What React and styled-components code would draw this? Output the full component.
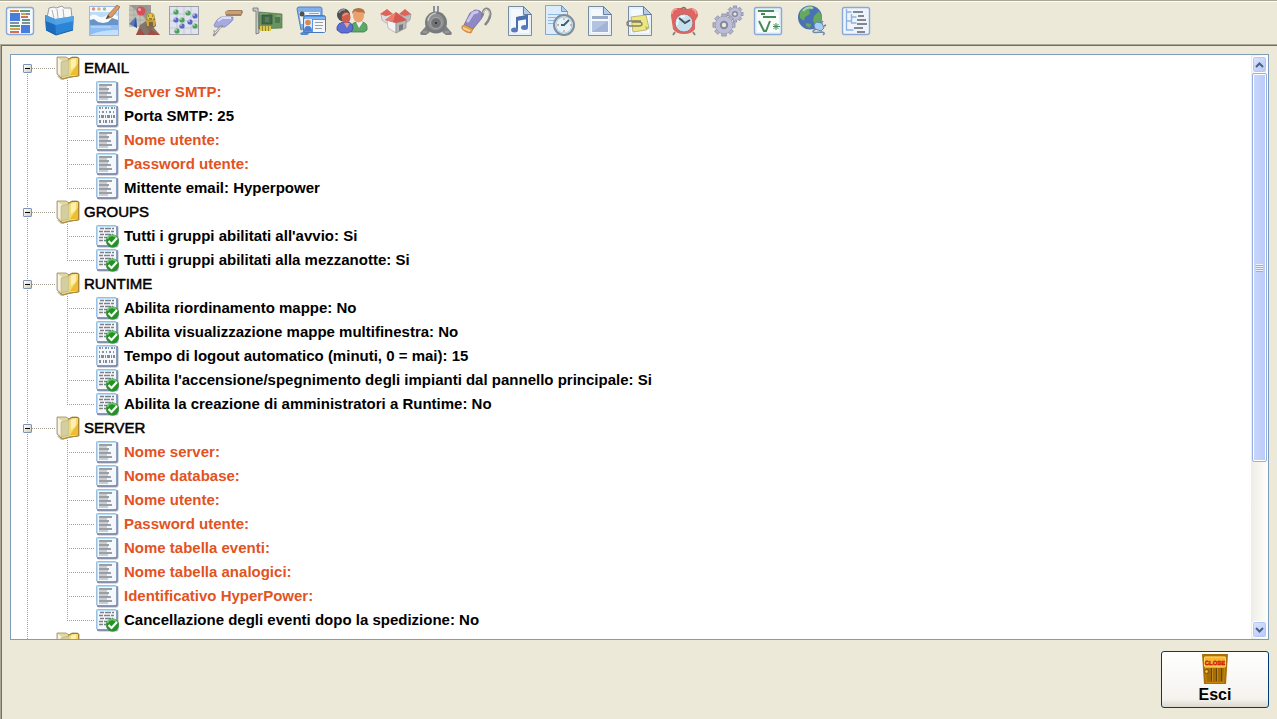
import React, { useState } from 'react'
import styled, { createGlobalStyle } from 'styled-components'

const GlobalStyle = createGlobalStyle`
  * {
    box-sizing: border-box;
  }
  body {
    margin: 0;
    background: #ece9d8;
    font-family: "Liberation Sans", Arial, sans-serif;
    color: #000;
  }
  ul {
    list-style: none;
    margin: 0;
    padding: 0;
  }
  button {
    font: inherit;
    color: inherit;
    padding: 0;
    border: 0;
    background: none;
  }
`

/* ---------- toolbar icons, all on a 32x32 grid ---------- */

const PanelIcon = () => (
  <svg viewBox='0 0 32 32'>
    <rect x='2.5' y='2.5' width='27' height='27' rx='2.5' fill='#f4f9ff' stroke='#8aa9d6' strokeWidth='1.4' />
    <path d='M6 6h9' stroke='#c98a4b' strokeWidth='2' />
    <path d='M16 6h10M6 21h10M18 15h8' stroke='#5d9a72' strokeWidth='2' />
    <path d='M17 12h7M6 27h9' stroke='#d2705e' strokeWidth='2' />
    <path d='M17 9h8M6 24h10' stroke='#d6a04a' strokeWidth='2' />
    <path d='M22 9h4M18 18h8' stroke='#8a8f9c' strokeWidth='2' />
    <rect x='6' y='8' width='10' height='8' fill='#4a7ddb' />
    <rect x='17' y='20' width='9' height='8' fill='#4a7ddb' />
    <path d='M6 18h9' stroke='#7d91ab' strokeWidth='2' />
  </svg>
)

const FilesIcon = () => (
  <svg viewBox='0 0 32 32'>
    <path d='M3 13l2-10 5-1 2 1 6-2 2 2 7 0 1 10-11 4z' fill='#f8f8f6' stroke='#999ca1' />
    <path d='M8 5l2 8M13 4l1 9M19 4l1 9' stroke='#b0b2b6' fill='none' />
    <path d='M1 10l10 4 19-3-1 14-17 5-10-5z' fill='#2b84d6' />
    <path d='M1 10l10 4 1 16-10-5z' fill='#1c6cbd' />
    <path d='M1 10l10 4 19-3-.3 5-18 4-10-4z' fill='#63b0ef' opacity='.7' />
    <path d='M2 25l10 5 17-5' fill='none' stroke='#1d5c9f' />
  </svg>
)

const PaintIcon = () => (
  <svg viewBox='0 0 32 32'>
    <rect x='1.5' y='1.5' width='29' height='29' fill='#f4f8ff' stroke='#9db7de' />
    <circle cx='5.500' cy='4' r='1.700' fill='#e58b86' />
    <circle cx='11' cy='4' r='1.700' fill='#e6b16d' />
    <circle cx='16.500' cy='4' r='1.700' fill='#8cc78c' />
    <rect x='2' y='7' width='28' height='6' fill='#bcdcfa' />
    <path d='M2 11q4-3 8 0t9-1q5-2 11 1v8H2z' fill='#f5fbff' />
    <path d='M2 20v-5l4-1 4 3 5 1 5-1 4-4 6 2v5z' fill='#6a93c6' />
    <rect x='2' y='20' width='28' height='10' fill='#8dbdf3' />
    <path d='M3 22h20' stroke='#cfe6ff' />
    <path d='M2 30q10-5 28-5v5z' fill='#c3e0fc' />
    <path d='M18 14l2-4L29 0l3 2-8 10z' fill='#d99c62' stroke='#96653b' strokeWidth='.7' />
    <path d='M18 14l2-4 2 2z' fill='#5a4a3c' />
  </svg>
)

const ShapesIcon = () => (
  <svg viewBox='0 0 32 32'>
    <rect x='1' y='0' width='22' height='22' fill='#c2c1b9' />
    <path d='M1 5h22M1 10h22M1 15h22M6 0v22M12 0v22M18 0v22' stroke='#a5a49d' strokeWidth='.7' />
    <path d='M1 0h22v20L12 8z' fill='#80807c' opacity='.6' />
    <circle cx='13' cy='6' r='4.500' fill='#d6505a' />
    <circle cx='11.500' cy='4.500' r='1.500' fill='#f3a9a9' />
    <path d='M1 19l7-7 1 11z' fill='#5677bd' />
    <path d='M8 12l1 11-3-2z' fill='#36548f' />
    <path d='M8 30l4-10 6-4 8 7 6 7z' fill='#85746c' />
    <path d='M8 30l4-7 5 7zM22 24l10 6H20z' fill='#a14e45' />
    <path d='M19 13h8l1 8-7 5-4-5z' fill='#7d6d52' />
    <path d='M18 15h9v6h-8z' fill='#d5a046' />
    <path d='M21 17h4v4h-4z' fill='#77663f' />
    <circle cx='22.500' cy='12' r='4' fill='#e3c341' stroke='#8b752c' strokeWidth='.6' />
    <path d='M20 11h1M24 11h1M21 14h3' stroke='#55452b' />
  </svg>
)

const GridIcon = () => (
  <svg viewBox='0 0 32 32'>
    <rect x='1.500' y='1.500' width='29' height='28' fill='#e0e2ee' stroke='#9c9fa8' />
    <path d='M9 2v27M16 2v27M23 2v27M2 9h28M2 16h28M2 23h28' stroke='#c3c6d6' />
    {[[8, 7], [20, 8], [14, 15], [27, 21], [9, 26]].map(([x, y]) => (
      <g key={`${x}-${y}`}>
        <circle cx={x} cy={y} r='2.600' fill='#4ca254' />
        <circle cx={x - 1} cy={y - 1} r='.9' fill='#b5e0b3' />
      </g>
    ))}
    {[[27, 11], [8, 15], [22, 17], [14, 21]].map(([x, y]) => (
      <g key={`${x}-${y}`}>
        <circle cx={x} cy={y} r='2.600' fill='#5468c4' />
        <circle cx={x - 1} cy={y - 1} r='.9' fill='#bcc6f2' />
      </g>
    ))}
  </svg>
)

const TrowelIcon = () => (
  <svg viewBox='0 0 32 32'>
    <path d='M13 7l3-2h14l1 2-2 4H14z' fill='#a08064' />
    <path d='M14 6h15v3H13z' fill='#cf9f6b' />
    <path d='M2 20l3-5 4-3 12 0q1 3-3 6l-5 4-10 0z' fill='#a4abe0' stroke='#8186b5' strokeWidth='.8' />
    <path d='M6 16l4-3 9 0' stroke='#d9ddfb' fill='none' strokeWidth='2' />
    <path d='M10 21q-3 1-4 4l-4 5' stroke='#96989e' strokeWidth='2.500' fill='none' strokeLinecap='round' />
    <path d='M2 25q0 2 1 4' stroke='#a5a6ab' strokeWidth='1.500' fill='none' />
    <path d='M9 22q-2 1-3 3l-3 3' stroke='#e6e6ea' fill='none' />
  </svg>
)

const BoardIcon = () => (
  <svg viewBox='0 0 32 32'>
    <path d='M1 3h5l1 25-3 1V6H1z' fill='#c6c8ca' stroke='#77797b' strokeWidth='.9' />
    <path d='M7 7l23 2v14l-23 1z' fill='#6a9560' stroke='#517549' strokeWidth='.7' />
    <path d='M8 9h8M24 11h5' stroke='#8fb884' />
    <rect x='10' y='10' width='10' height='9' fill='#42694a' stroke='#2f4d38' strokeWidth='.7' />
    <rect x='13' y='12' width='4' height='5' fill='#587c5c' />
    <rect x='23' y='12' width='5' height='6' fill='#4d7854' />
    <path d='M8 21h11v5H8z' fill='#d9c84f' />
    <path d='M10.500 21v5M13.500 21v5M16.500 21v5' stroke='#948830' />
  </svg>
)

const CardsIcon = () => (
  <svg viewBox='0 0 32 32'>
    <path d='M1 4q0-2 2-2h21q2 0 2 2v8H10v10l-5 3z' fill='#80b0ea' stroke='#577fb8' />
    <path d='M3 7h21v4H9v8H5z' fill='#eef5fc' />
    <circle cx='6' cy='9' r='2.500' fill='#505050' />
    <path d='M13 8.500h10' stroke='#9aa3ad' />
    <path d='M4 28q5-1 5-6l4 7-2 1H5z' fill='#4d8bd8' />
    <rect x='7.500' y='10.500' width='22' height='17' rx='2' fill='#5796e2' stroke='#4779ba' />
    <path d='M9 13h20' stroke='#b5d7fb' />
    <path d='M17 15h12v12H17z' fill='#f4f7fa' />
    <path d='M19 17.500h8M19 20.500h8M19 23.500h7' stroke='#979da4' />
    <rect x='8' y='14' width='8' height='12' fill='#d9e9fb' />
    <circle cx='12' cy='17.500' r='2.800' fill='#d88a4c' />
    <path d='M8 26q0-5 4-5t4 5z' fill='#4f7fd0' />
  </svg>
)

const UsersIcon = () => (
  <svg viewBox='0 0 32 32'>
    <path d='M15 27V21q2-4 6-4l3 2 2-2q5 1 5 5v3l-3 2z' fill='#5da768' stroke='#3f7b49' strokeWidth='.8' />
    <path d='M20 17l3 6 4-6z' fill='#eef2ee' />
    <ellipse cx='22.500' cy='10.500' rx='5.500' ry='7' fill='#eba06f' />
    <path d='M16 9q0-6 6.500-6t6.500 6l-3-2q-4 1-7-1z' fill='#b5714a' />
    <path d='M1 25v-3q1-4 6-5h6q4 2 4 6l-1 3-4 2H5z' fill='#5d6fd3' stroke='#3e4a9b' strokeWidth='.8' />
    <path d='M8 18l3 5 3-5z' fill='#e5a28f' />
    <circle cx='7.500' cy='10' r='6.500' fill='#4c4e50' />
    <path d='M3 8q2-4 6-3' stroke='#939698' fill='none' strokeWidth='1.500' />
    <ellipse cx='10' cy='12.500' rx='4.500' ry='5.500' fill='#cf5e4a' />
    <path d='M7 11q2-3 5-2' stroke='#e99a84' fill='none' strokeWidth='1.500' />
  </svg>
)

const HousesIcon = () => (
  <svg viewBox='0 0 32 32'>
    <path d='M1 9l5 2 5-2v8l-5 1-4-3z' fill='#dedfe0' stroke='#97999b' strokeWidth='.6' />
    <path d='M21 9l5 2 5-2-1 6-4 3-5-1z' fill='#b9bbbd' stroke='#8d8f91' strokeWidth='.6' />
    <path d='M0 9l7-5 6 5-7 2zM19 9l6-5 6 5-6 2z' fill='#dc655b' />
    <path d='M7 15l9 3 0 10-8-5z' fill='#f3f3f3' stroke='#aaa' strokeWidth='.7' />
    <path d='M16 18l10-3v8l-10 5z' fill='#b4b6b7' stroke='#8b8d8e' strokeWidth='.7' />
    <path d='M5 15L16 7l11 8-11 3z' fill='#d6584e' />
    <path d='M16 7L5 15l8 2z' fill='#ec7d71' />
    <path d='M19 20l4-1v5l-4 2z' fill='#77797b' />
  </svg>
)

const SirenIcon = () => (
  <svg viewBox='0 0 32 32'>
    <path d='M0 28l6-7 4 6-4 3H1zM32 28l-6-7-4 6 4 3h5z' fill='#808284' />
    <rect x='13' y='1' width='6' height='7' fill='#8f9193' />
    <path d='M15 1h2v7h-2z' fill='#e8e8e8' />
    <circle cx='16' cy='17.500' r='11' fill='#77797b' />
    <circle cx='15.500' cy='17' r='8.500' fill='#8d8f91' />
    <path d='M8 16q1-7 8-8' fill='none' stroke='#c4c5c6' strokeWidth='1.500' />
    <circle cx='16' cy='18' r='5.500' fill='#707274' stroke='#a9aaab' />
    <circle cx='16' cy='18' r='1' fill='#232425' />
    <path d='M3 27h4M25 27h4' stroke='#aaacad' />
  </svg>
)

const UsbIcon = () => (
  <svg viewBox='0 0 32 32'>
    <path d='M20 11q3 1 3-4 2-5 6-2 3 4-1 11l-3 4' fill='none' stroke='#85878b' strokeWidth='2.500' />
    <path d='M23 8q1-4 4-3.500 3 1 2 6' fill='none' stroke='#dedede' />
    <path d='M4 20l6-12 5-3q6 0 7 4v4l-9 11z' fill='#8e88c4' stroke='#716b9c' strokeWidth='.8' />
    <path d='M8 16l5-8 4-1' stroke='#c9c5ee' strokeWidth='3' fill='none' strokeLinecap='round' />
    <path d='M2 21l3-1 8 4-2 4q-5 0-9-4z' fill='#eba44e' stroke='#b7742d' strokeWidth='.7' />
    <path d='M3 23l7 3' fill='none' stroke='#f9dc9b' strokeWidth='1.500' />
  </svg>
)

const Page = ({ children }) => (
  <>
    <path d='M4.500 1.500h15l8 8v21h-23z' fill='#e6f0fa' stroke='#7b8ba1' />
    <path d='M7 4h11v7h7v17H7z' fill='#f4f9fe' />
    <path d='M19.500 1.500v8h8z' fill='#b0cdeb' stroke='#69809f' />
    {children}
  </>
)

const MusicIcon = () => (
  <svg viewBox='0 0 32 32'>
    <Page>
      <path d='M13 24V13l10-2v11' fill='none' stroke='#4d6fae' strokeWidth='2' />
      <path d='M12 12l12-2v4l-12 2z' fill='#4d6fae' />
      <ellipse cx='10.500' cy='25' rx='3.500' ry='2.500' fill='#587ab9' />
      <ellipse cx='20.500' cy='22.500' rx='3.500' ry='2.500' fill='#587ab9' />
    </Page>
  </svg>
)

const ScheduleIcon = () => (
  <svg viewBox='0 0 32 32'>
    <path d='M1.500.5h16l6 6v23h-22z' fill='#dcecfb' stroke='#86a6cc' />
    <path d='M17.500.5v6h6z' fill='#b0cdeb' stroke='#7296c2' />
    <path d='M4 9.500h13M4 12.500h8M4 15.500h6M4 18.500h5' stroke='#90b9e4' />
    <circle cx='20' cy='20' r='10' fill='#d2e5f0' stroke='#7d8d9c' strokeWidth='2' />
    <circle cx='20' cy='20' r='8' fill='#e3f3f9' stroke='#b9cdda' />
    <path d='M20 20l5-5M21 20h-4' stroke='#42606e' strokeWidth='1.800' />
    <path d='M20 13v2M20 25v2M13 20h2M26 20h2' stroke='#d69a80' strokeWidth='1.300' />
  </svg>
)

const ReportIcon = () => (
  <svg viewBox='0 0 32 32'>
    <Page>
      <path d='M8 12.500h16' stroke='#9babc9' strokeWidth='3' />
      <rect x='8' y='16' width='16' height='11' fill='#a3b3d6' />
      <path d='M8 27V16h16z' fill='#b5c3e2' />
    </Page>
  </svg>
)

const NoteIcon = () => (
  <svg viewBox='0 0 32 32'>
    <Page>
      <path d='M7 12l15-2 3 13-3 2-13 2z' fill='#ece683' stroke='#aba66a' strokeWidth='.8' />
      <path d='M22 25l-1-4 4 2z' fill='#c2b757' />
      <path d='M17 16H6q-3 0-3 2.500T6 21h9q3 0 3-2t-3-2H8' fill='none' stroke='#85836a' strokeWidth='1.400' />
    </Page>
  </svg>
)

const AlarmIcon = () => (
  <svg viewBox='0 0 32 32'>
    <path d='M7 27l-2 3M25 27l2 3' stroke='#8b8583' strokeWidth='2' />
    <path d='M3 11q0-7 5-8l5 0 6 1 5-1q6 1 6 8l-3 5v8q-3 5-11 5T5 24z' fill='#de6561' />
    <path d='M4 9q0-5 5-5M24 4q4 1 4 5' fill='none' stroke='#f4a29d' strokeWidth='1.500' />
    <path d='M13 4q3-3 5 0' fill='none' stroke='#8c6b69' strokeWidth='1.500' />
    <circle cx='16' cy='18' r='9' fill='#c5e0ee' stroke='#b96b68' />
    <path d='M9 20q0-8 8-9' fill='none' stroke='#e9f8fd' strokeWidth='2' />
    <path d='M11 13l6 5 5-3' fill='none' stroke='#475059' strokeWidth='2' />
  </svg>
)

const Gear = ({ x, y, r }) => (
  <g transform={`translate(${x} ${y})`}>
    {[0, 45, 90, 135, 180, 225, 270, 315].map(a => (
      <rect key={a} x={-r * 0.2} y={-r} width={r * 0.4} height={r * 0.5} transform={`rotate(${a})`} fill='#b3b5cd' stroke='#8c8ea8' strokeWidth='.8' />
    ))}
    <circle r={r * 0.8} fill='#bcbed7' stroke='#9395ae' strokeWidth='.6' />
    <circle r={r * 0.38} fill='#85879d' />
    <circle r={r * 0.2} fill='#ece9d8' />
  </g>
)

const GearsIcon = () => (
  <svg viewBox='0 0 32 32'>
    <Gear x={23} y={9} r={8} />
    <Gear x={12} y={20} r={11} />
  </svg>
)

const FormulaIcon = () => (
  <svg viewBox='0 0 32 32'>
    <rect x='2.500' y='2.500' width='27' height='27' rx='2' fill='#e6f1fa' stroke='#8ba9d4' strokeWidth='1.400' />
    <rect x='5' y='7' width='22' height='20' fill='#f9fdfc' />
    <path d='M6 6h16M9 9h4M11 12h13' stroke='#448b55' strokeWidth='2' />
    <path d='M7 16l5 10h2l4-10' fill='none' stroke='#448b55' strokeWidth='2' />
    <path d='M24 18v7M21 21.500h7M21.500 19l5 5M26.500 19l-5 5' stroke='#448b55' />
  </svg>
)

const GlobeIcon = () => (
  <svg viewBox='0 0 32 32'>
    <circle cx='14' cy='12.500' r='12' fill='#4971b3' />
    <path d='M4 7q5-7 12-6l2 3-5 1 1 4-5 3-1 4-4-3zM18 11l5-5 3 6-2 6-4 2-3-4z' fill='#65a85e' />
    <path d='M10 18l5 1-1 4-4-2z' fill='#65a85e' />
    <path d='M7 6q4-5 10-3' fill='none' stroke='#c5e4ec' strokeWidth='2' opacity='.7' />
    <path d='M20 17l6 1 2 5-3 3-6-2-1-4z' fill='#a6cef0' stroke='#5d88b6' />
    <path d='M25 18l2-2M28 21l2-1' stroke='#67798a' strokeWidth='1.500' />
    <path d='M20 24q-6 3 0 3.500l6-.5q4 1 1 3' fill='none' stroke='#718aa5' strokeWidth='1.500' />
  </svg>
)

const TreeIcon = () => (
  <svg viewBox='0 0 32 32'>
    <rect x='2.500' y='2.500' width='27' height='27' rx='2' fill='#edf4fd' stroke='#8ba9d4' strokeWidth='1.400' />
    <path d='M6.500 4v21h7M6.500 7h5M6.500 16h5M11.500 9v9h5M11.500 12h5' fill='none' stroke='#8eb2dd' strokeWidth='1.300' />
    <path d='M13 7h10M18 11h6M17 15h9M17 19h10M14 23h9M17 27h8' stroke='#85878b' strokeWidth='2' />
  </svg>
)

const toolGroups = [
  [['Pannelli', PanelIcon], ['Archivio', FilesIcon]],
  [['Mappe', PaintIcon], ['Simboli', ShapesIcon], ['Matrice', GridIcon]],
  [['Installazione', TrowelIcon], ['Schede', BoardIcon]],
  [['Anagrafiche', CardsIcon], ['Utenti', UsersIcon]],
  [['Edifici', HousesIcon], ['Sirene', SirenIcon], ['Connessioni', UsbIcon]],
  [['Suoni', MusicIcon], ['Programmazione', ScheduleIcon], ['Report', ReportIcon], ['Note', NoteIcon]],
  [['Allarmi', AlarmIcon]],
  [['Impostazioni', GearsIcon], ['Formule', FormulaIcon]],
  [['Rete', GlobeIcon]],
  [['Struttura', TreeIcon]]
]

/* ---------- tree icons ---------- */

const FolderIcon = () => (
  <svg viewBox='0 0 24 24'>
    <path d='M1 20l4 4 17-4-2-2z' fill='#8c8a80' opacity='.5' />
    <path d='M1 1h9l3 2 3-2h5l2 1v18l-9 1-8 2-3-3-2-2z' fill='#e3d9a0' stroke='#978a62' strokeWidth='.8' />
    <path d='M2 2l4 3v16l-4-4z' fill='#f7f4e4' />
    <path d='M5 6l8-2v15l-8 2z' fill='#d5cf9f' stroke='#b9ae72' strokeWidth='.6' />
    <path d='M13 5l3-3h5v16l-8 2z' fill='#f6dd6b' />
    <path d='M14 19l8-12v12z' fill='#ecbf33' />
    <path d='M15 4l5-2v8l-5 4z' fill='#fdf0b4' />
    <path d='M22.500 2v18' stroke='#a98434' />
    <path d='M12 3.500l4-2h6' fill='none' stroke='#a3753a' />
    <path d='M4 21l3 2 7-2 8-1' fill='none' stroke='#b48c2c' />
  </svg>
)

const SheetBase = () => (
  <>
    <rect x='2' y='2' width='21.500' height='21.500' rx='2' fill='#b4b6bd' />
    <rect x='1' y='1' width='21' height='21' rx='2' fill='#b9dcf5' />
    <rect x='3' y='3' width='18' height='18' fill='#f4f8fc' />
    <path d='M1.500 21V2.500q0-1 1-1H21' fill='none' stroke='#9cc0e2' />
    <path d='M22 2v18q0 2-2 2H2' fill='none' stroke='#7482a6' strokeWidth='1.300' />
  </>
)

const TextIcon = () => (
  <svg viewBox='0 0 24 24'>
    <SheetBase />
    <path d='M4 5h13M4 9h10M4 13h12M4 17h13' stroke='#7c8188' strokeWidth='1.300' />
    <path d='M4 7h8M4 11h9M4 15h8M4 19h9' stroke='#9fa4ab' />
  </svg>
)

const NumberIcon = () => (
  <svg viewBox='0 0 24 24'>
    <SheetBase />
    <path d='M4 4h16' stroke='#8994a0' strokeDasharray='2 1 1 2' strokeWidth='2' />
    <path d='M4 8h15' stroke='#8994a0' strokeDasharray='1 2 2 2' strokeWidth='2' />
    <path d='M4 12.500h16' stroke='#848a90' strokeDasharray='1 1 3 1' strokeWidth='3' />
    <path d='M4 17.500h16' stroke='#848a90' strokeDasharray='2 2 1 1' strokeWidth='3' />
  </svg>
)

const CheckIcon = () => (
  <svg viewBox='0 0 24 24'>
    <SheetBase />
    <path d='M5 4.500h14M4 7.500h15M5 10.500h13M4 13.500h8M4 16.500h7' stroke='#7c8188' strokeDasharray='4 1 6 1' strokeWidth='1.400' />
    <circle cx='17.500' cy='17' r='6.300' fill='#219326' stroke='#2f8433' strokeWidth='.6' />
    <path d='M12.500 15q1-3.500 5-3.500 3 0 4.500 3' fill='none' stroke='#72c76d' strokeWidth='1.500' />
    <path d='M13.500 17l3 3 5.500-6' fill='none' stroke='#fff' strokeWidth='2.200' />
  </svg>
)

const icons = { text: TextIcon, number: NumberIcon, check: CheckIcon }

const DoorIcon = () => (
  <svg viewBox='0 0 26 32' width='26' height='32'>
    <path d='M0 1h26l-2 30H2z' fill='#a8700b' />
    <path d='M2 3h22l-2 27H4z' fill='#c4860f' />
    <path d='M4 15h18l-1 14H5z' fill='#a66c06' />
    <path d='M9.500 15v13M14.500 15v13M19.500 15v13' stroke='#6b4200' />
    <path d='M10.500 15v13M15.500 15v13' stroke='#c48a1c' />
    <rect x='2.500' y='4' width='21' height='10' rx='1' fill='#f6b532' stroke='#ffdc6c' />
    <text x='13' y='11.500' textAnchor='middle' fontFamily='Liberation Sans, sans-serif' fontWeight='bold' fontSize='6' textRendering='geometricPrecision' fill='#d51d0c' stroke='#d51d0c' strokeWidth='.4'>CLOSE</text>
    <circle cx='4.500' cy='18.500' r='2' fill='#edb637' stroke='#704300' strokeWidth='.8' />
  </svg>
)

const Chevron = ({ up }) => (
  <svg width='9' height='6' viewBox='0 0 9 6'>
    <path d={up ? 'M1 5l3.500-3.500L8 5' : 'M1 1l3.500 3.500L8 1'} fill='none' stroke='#4d6185' strokeWidth='2' />
  </svg>
)

/* ---------- data ---------- */

const groups = [
  {
    name: 'EMAIL',
    items: [
      { type: 'text', label: 'Server SMTP:' },
      { type: 'number', label: 'Porta SMTP:', value: '25' },
      { type: 'text', label: 'Nome utente:' },
      { type: 'text', label: 'Password utente:' },
      { type: 'text', label: 'Mittente email:', value: 'Hyperpower' }
    ]
  },
  {
    name: 'GROUPS',
    items: [
      { type: 'check', label: "Tutti i gruppi abilitati all'avvio:", value: 'Si' },
      { type: 'check', label: 'Tutti i gruppi abilitati alla mezzanotte:', value: 'Si' }
    ]
  },
  {
    name: 'RUNTIME',
    items: [
      { type: 'check', label: 'Abilita riordinamento mappe:', value: 'No' },
      { type: 'check', label: 'Abilita visualizzazione mappe multifinestra:', value: 'No' },
      { type: 'number', label: 'Tempo di logout automatico (minuti, 0 = mai):', value: '15' },
      { type: 'check', label: "Abilita l'accensione/spegnimento degli impianti dal pannello principale:", value: 'Si' },
      { type: 'check', label: 'Abilita la creazione di amministratori a Runtime:', value: 'No' }
    ]
  },
  {
    name: 'SERVER',
    items: [
      { type: 'text', label: 'Nome server:' },
      { type: 'text', label: 'Nome database:' },
      { type: 'text', label: 'Nome utente:' },
      { type: 'text', label: 'Password utente:' },
      { type: 'text', label: 'Nome tabella eventi:' },
      { type: 'text', label: 'Nome tabella analogici:' },
      { type: 'text', label: 'Identificativo HyperPower:' },
      { type: 'check', label: 'Cancellazione degli eventi dopo la spedizione:', value: 'No' }
    ]
  },
  { name: '', items: [] }
]

function Group ({ name, items }) {
  const [open, setOpen] = useState(true)
  return (
    <GroupStyled>
      <GroupHeader>
        <Toggle type='button' aria-label={name} aria-expanded={open} onClick={() => setOpen(!open)}>
          <svg width='9' height='9' viewBox='0 0 9 9'>
            <path d={open ? 'M2 4.500h5' : 'M2 4.500h5M4.500 2v5'} stroke='#000' />
          </svg>
        </Toggle>
        <Connector $width={24} />
        <NodeIcon><FolderIcon /></NodeIcon>
        <GroupName>{name}</GroupName>
      </GroupHeader>
      {open && (
        <ul>
          {items.map(({ type, label, value }) => {
            const Icon = icons[type]
            return (
              <Item key={label}>
                <Connector $width={28} />
                <NodeIcon><Icon /></NodeIcon>
                <ItemText $missing={!value}>{label} {value}</ItemText>
              </Item>
            )
          })}
        </ul>
      )}
    </GroupStyled>
  )
}

function App () {
  return (
    <Window>
      <GlobalStyle />
      <Toolbar>
        {toolGroups.map((tools, i) => (
          <ToolGroup key={i}>
            {tools.map(([label, Icon]) => (
              <ToolButton key={label} type='button' aria-label={label}><Icon /></ToolButton>
            ))}
          </ToolGroup>
        ))}
      </Toolbar>
      <Content>
        <TreePanel>
          <Tree>
            {groups.map(group => <Group key={group.name} {...group} />)}
          </Tree>
          <Scrollbar>
            <ScrollButton type='button' aria-label='Su'><Chevron up /></ScrollButton>
            <Track>
              <Thumb>
                <Grip />
              </Thumb>
            </Track>
            <ScrollButton type='button' aria-label='Giù'><Chevron /></ScrollButton>
          </Scrollbar>
        </TreePanel>
        <Footer>
          <ExitButton type='button'>
            <DoorIcon />
            Esci
          </ExitButton>
        </Footer>
      </Content>
    </Window>
  )
}

const Window = styled.div`
  display: flex;
  flex-direction: column;
  height: 100vh;
`

const Toolbar = styled.header`
  display: flex;
  gap: 4px;
  height: 44px;
  flex: none;
  border-top: 1px solid #aca899;
  box-shadow: inset 0 1px #fff;
  padding-top: 2px;
`

const ToolGroup = styled.div`
  display: flex;
`

const ToolButton = styled.button`
  display: flex;
  justify-content: center;
  align-items: center;
  width: 40px;
  height: 36px;
  svg {
    width: 32px;
    height: 32px;
  }
`

const Content = styled.main`
  display: flex;
  flex-direction: column;
  flex: 1;
  min-height: 0;
  border: solid #aca899;
  border-width: 1px 0 0 1px;
  box-shadow: inset 1px 1px #716f64;
  padding: 9px 8px 11px 9px;
`

const TreePanel = styled.section`
  display: flex;
  flex: 1;
  min-height: 0;
  background: #fff;
  border: 1px solid #7f9db9;
`

const Tree = styled.ul`
  flex: 1;
  overflow: hidden;
  && {
    padding-top: 1px;
  }
`

const dotsDown = 'repeating-linear-gradient(#a5a294 0 1px, transparent 1px 2px)'
const dotsAcross = 'repeating-linear-gradient(90deg, #a5a294 0 1px, transparent 1px 2px)'

const GroupStyled = styled.li`
  background: ${dotsDown} 16px 0 / 1px 100% no-repeat;
  &:first-child {
    background-position: 16px 12px;
  }
  ul {
    margin-left: 56px;
  }
`

const GroupHeader = styled.div`
  display: flex;
  align-items: center;
  height: 24px;
  padding-left: 12px;
`

const Toggle = styled.button`
  width: 9px;
  height: 9px;
  && {
    border: 1px solid #7b96b5;
    border-radius: 1px;
    background: linear-gradient(135deg, #fff, #cfcabb);
  }
  svg {
    display: block;
    margin: -1px;
  }
`

const Connector = styled.span`
  flex: none;
  width: ${({ $width }) => $width}px;
  height: 1px;
  background: ${dotsAcross};
`

const NodeIcon = styled.span`
  flex: none;
  width: 24px;
  height: 24px;
  svg {
    display: block;
  }
`

const GroupName = styled.span`
  margin-left: 4px;
  font-size: 15px;
  line-height: 24px;
  -webkit-text-stroke: 0.5px #000;
`

const Item = styled.li`
  display: flex;
  align-items: center;
  height: 24px;
  background: ${dotsDown} 0 0 / 1px 100% no-repeat;
  &:last-child {
    background-size: 1px 12px;
  }
`

const ItemText = styled.span`
  margin-left: 5px;
  font-size: 15px;
  font-weight: bold;
  line-height: 24px;
  white-space: nowrap;
  color: ${({ $missing }) => $missing ? '#e2531f' : '#000'};
`

const Scrollbar = styled.div`
  display: flex;
  flex-direction: column;
  width: 17px;
  padding: 1px;
  background: linear-gradient(90deg, #eeede5, #fefefb);
`

const ScrollButton = styled.button`
  display: flex;
  justify-content: center;
  align-items: center;
  height: 17px;
  flex: none;
  && {
    border: 1px solid #fff;
    border-radius: 3px;
    background: linear-gradient(135deg, #dbe5fe, #b5c8f7);
    box-shadow: inset 0 0 0 1px #b4c8f6;
  }
`

const Track = styled.div`
  flex: 1;
`

const Thumb = styled.div`
  display: flex;
  justify-content: center;
  align-items: center;
  height: 71%;
  border: 1px solid #98b0e0;
  border-radius: 2px;
  box-shadow: inset 0 0 0 1px #fff;
  background: linear-gradient(90deg, #c9d7fc, #bacbf9);
`

const Grip = styled.span`
  width: 7px;
  height: 8px;
  background: repeating-linear-gradient(#eef4fe 0 1px, #8cb0f8 1px 2px);
`

const Footer = styled.footer`
  display: flex;
  justify-content: flex-end;
  padding-top: 11px;
`

const ExitButton = styled.button`
  display: flex;
  flex-direction: column;
  align-items: center;
  width: 108px;
  height: 57px;
  && {
    padding-top: 1px;
    border: 1px solid #003c74;
    border-radius: 3px;
    background: linear-gradient(#fff, #f4f3ee 85%, #dcd8cd);
    font-size: 16px;
    font-weight: bold;
    line-height: 20px;
  }
`

export default App
